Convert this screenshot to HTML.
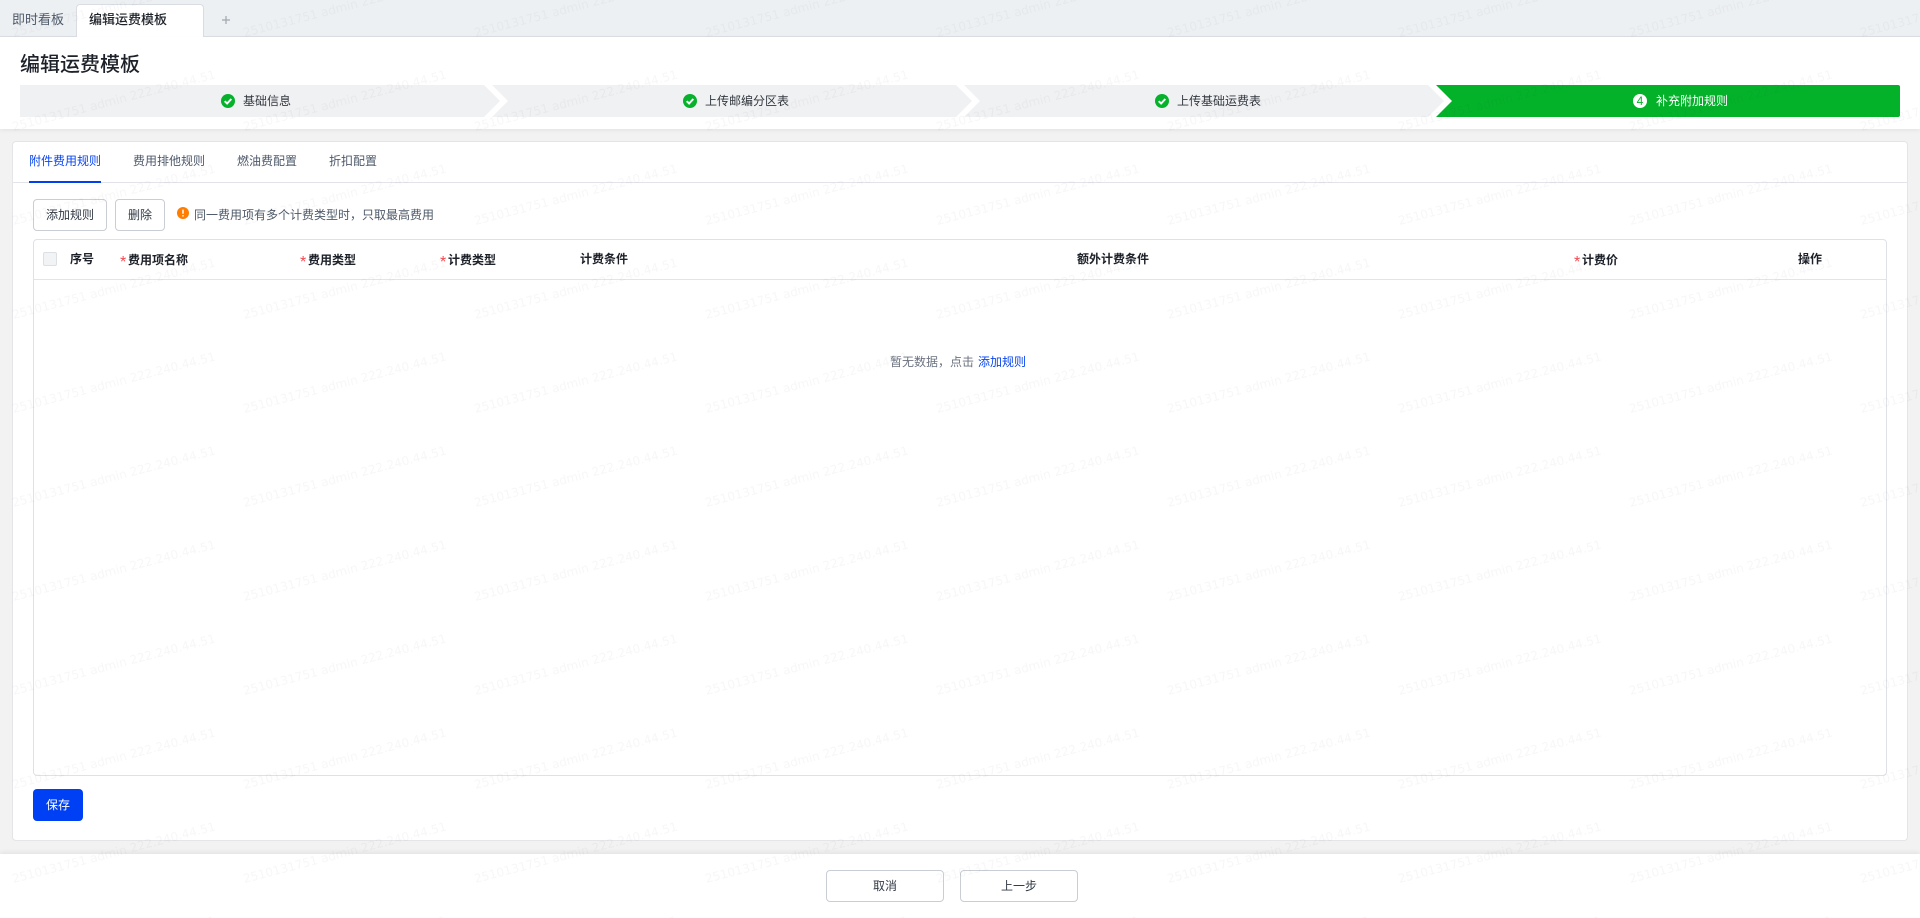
<!DOCTYPE html>
<html lang="zh-CN">
<head>
<meta charset="utf-8">
<title>编辑运费模板</title>
<style>
html,body{margin:0;padding:0;width:1920px;height:918px;overflow:hidden;background:#f2f2f2;}
body{position:relative;font-family:"Liberation Sans","Noto Sans CJK SC",sans-serif;font-size:12px;color:#1d2129;}
.a{position:absolute;white-space:nowrap;}
.t{position:absolute;white-space:nowrap;line-height:20px;height:20px;}
.b{font-weight:700;color:#1d2129;}
.g{color:#4e5969;}
.star{position:absolute;color:#f5484f;font-size:16px;line-height:20px;font-weight:400;}
.btn{position:absolute;box-sizing:border-box;border:1px solid #c9cdd4;border-radius:4px;background:transparent;text-align:center;color:#1d2129;}
.step{position:absolute;top:85px;height:32px;background:#f0f1f3;}
</style>
</head>
<body>
<!-- top tab bar -->
<div class="a" style="left:0;top:0;width:1920px;height:37px;background:#edf0f3;border-bottom:1px solid #d9dde3;box-sizing:border-box;"></div>
<div class="t g" style="left:12px;top:10px;font-size:13px;">即时看板</div>
<div class="a" style="left:76px;top:4px;width:128px;height:33px;box-sizing:border-box;background:#fff;border:1px solid #d9dde3;border-bottom:none;border-radius:4px 4px 0 0;"></div>
<div class="t" style="left:89px;top:10px;font-size:13px;font-weight:500;color:#1d2129;">编辑运费模板</div>
<svg class="a" style="left:221px;top:15px;" width="10" height="10" viewBox="0 0 10 10"><path d="M5 1v8M1 5h8" stroke="#a0a6b0" stroke-width="1.2" fill="none"/></svg>

<!-- page header -->
<div class="a" style="left:0;top:37px;width:1920px;height:92px;background:#fff;box-shadow:0 2px 4px rgba(0,0,0,.05);"></div>
<div class="a" style="left:20px;top:51px;font-size:20px;line-height:28px;font-weight:500;color:#1d2129;">编辑运费模板</div>

<!-- steps -->
<div class="step" style="left:20px;width:480px;clip-path:polygon(0 0,464px 0,480px 16px,464px 32px,0 32px);"></div>
<div class="step" style="left:492px;width:480px;clip-path:polygon(0 0,464px 0,480px 16px,464px 32px,0 32px,16px 16px);"></div>
<div class="step" style="left:964px;width:480px;clip-path:polygon(0 0,464px 0,480px 16px,464px 32px,0 32px,16px 16px);"></div>
<div class="step" style="left:1436px;width:464px;background:#04b22a;clip-path:polygon(0 0,464px 0,464px 32px,0 32px,16px 16px);border-radius:0 2px 2px 0;"></div>

<svg class="a" style="left:221px;top:94px;" width="14" height="14" viewBox="0 0 14 14"><circle cx="7" cy="7" r="7" fill="#06b12b"/><path d="M3.7 7.2 6.1 9.5 10.3 5" stroke="#fff" stroke-width="2" fill="none"/></svg>
<div class="t g" style="left:243px;top:91px;color:#33383f;">基础信息</div>
<svg class="a" style="left:683px;top:94px;" width="14" height="14" viewBox="0 0 14 14"><circle cx="7" cy="7" r="7" fill="#06b12b"/><path d="M3.7 7.2 6.1 9.5 10.3 5" stroke="#fff" stroke-width="2" fill="none"/></svg>
<div class="t g" style="left:705px;top:91px;color:#33383f;">上传邮编分区表</div>
<svg class="a" style="left:1155px;top:94px;" width="14" height="14" viewBox="0 0 14 14"><circle cx="7" cy="7" r="7" fill="#06b12b"/><path d="M3.7 7.2 6.1 9.5 10.3 5" stroke="#fff" stroke-width="2" fill="none"/></svg>
<div class="t g" style="left:1177px;top:91px;color:#33383f;">上传基础运费表</div>
<div class="a" style="left:1633px;top:94px;width:14px;height:14px;border-radius:50%;background:#fff;color:#04b22a;font-size:12px;line-height:14px;text-align:center;">4</div>
<div class="t" style="left:1656px;top:91px;color:#fff;">补充附加规则</div>

<!-- card -->
<div class="a" style="left:12px;top:141px;width:1896px;height:700px;box-sizing:border-box;background:#fff;border:1px solid #e4e5e8;border-radius:4px;"></div>
<div class="a" style="left:13px;top:182px;width:1894px;height:1px;background:#e2e4ea;"></div>
<div class="t" style="left:29px;top:151px;color:#0a46f0;">附件费用规则</div>
<div class="a" style="left:29px;top:181px;width:72px;height:2px;background:#0040f0;"></div>
<div class="t g" style="left:133px;top:151px;">费用排他规则</div>
<div class="t g" style="left:237px;top:151px;">燃油费配置</div>
<div class="t g" style="left:329px;top:151px;">折扣配置</div>

<!-- toolbar -->
<div class="btn" style="left:33px;top:199px;width:74px;height:32px;line-height:30px;color:#333a45;">添加规则</div>
<div class="btn" style="left:115px;top:199px;width:50px;height:32px;line-height:30px;color:#333a45;">删除</div>
<svg class="a" style="left:177px;top:207px;" width="12" height="12" viewBox="0 0 12 12"><circle cx="6" cy="6" r="6" fill="#ff7d00"/><path d="M6 2.6v4.2M6 8v1.5" stroke="#fff" stroke-width="1.5" fill="none"/></svg>
<div class="t g" style="left:194px;top:205px;">同一费用项有多个计费类型时&#xFF0C;只取最高费用</div>

<!-- table -->
<div class="a" style="left:33px;top:239px;width:1854px;height:537px;box-sizing:border-box;background:#fff;border:1px solid #dfe1e6;border-radius:4px;"></div>
<div class="a" style="left:34px;top:279px;width:1852px;height:1px;background:#e2e4e8;"></div>
<div class="a" style="left:43px;top:252px;width:14px;height:14px;box-sizing:border-box;background:#f2f3f5;border:1px solid #dcdfe4;border-radius:2px;"></div>
<div class="t b" style="left:70px;top:249px;">序号</div>
<div class="star" style="left:120px;top:253px;">*</div>
<div class="t b" style="left:128px;top:250px;">费用项名称</div>
<div class="star" style="left:300px;top:253px;">*</div>
<div class="t b" style="left:308px;top:250px;">费用类型</div>
<div class="star" style="left:440px;top:253px;">*</div>
<div class="t b" style="left:448px;top:250px;">计费类型</div>
<div class="t b" style="left:580px;top:249px;">计费条件</div>
<div class="t b" style="left:1077px;top:249px;">额外计费条件</div>
<div class="star" style="left:1574px;top:253px;">*</div>
<div class="t b" style="left:1582px;top:250px;">计费价</div>
<div class="t b" style="left:1798px;top:249px;">操作</div>
<div class="t" style="left:890px;top:352px;color:#6b7280;">暂无数据&#xFF0C;点击</div>
<div class="t" style="left:978px;top:352px;color:#0a46f0;">添加规则</div>

<!-- save -->
<div class="a" style="left:33px;top:789px;width:50px;height:32px;background:#0040f5;border-radius:4px;color:#fff;text-align:center;line-height:32px;">保存</div>

<!-- footer -->
<div class="a" style="left:0;top:854px;width:1920px;height:64px;background:#fff;box-shadow:0 -2px 4px rgba(0,0,0,.06);"></div>
<div class="btn" style="left:826px;top:870px;width:118px;height:32px;line-height:30px;color:#333a45;">取消</div>
<div class="btn" style="left:960px;top:870px;width:118px;height:32px;line-height:30px;color:#333a45;">上一步</div>

<!-- watermark -->
<svg class="a" style="left:0;top:0;pointer-events:none;" width="1920" height="918" viewBox="0 0 1920 918">
<defs>
<pattern id="wm" patternUnits="userSpaceOnUse" x="0" y="-43" width="231" height="94">
<text x="13.5" y="80" transform="rotate(-14.6 13.5 80)" text-rendering="geometricPrecision" font-family="DejaVu Sans,sans-serif" font-size="12" fill="#000" fill-opacity="0.032">2510131751 admin 222.240.44.51</text>
</pattern>
</defs>
<rect x="0" y="0" width="1920" height="918" fill="url(#wm)"/>
</svg>
</body>
</html>
